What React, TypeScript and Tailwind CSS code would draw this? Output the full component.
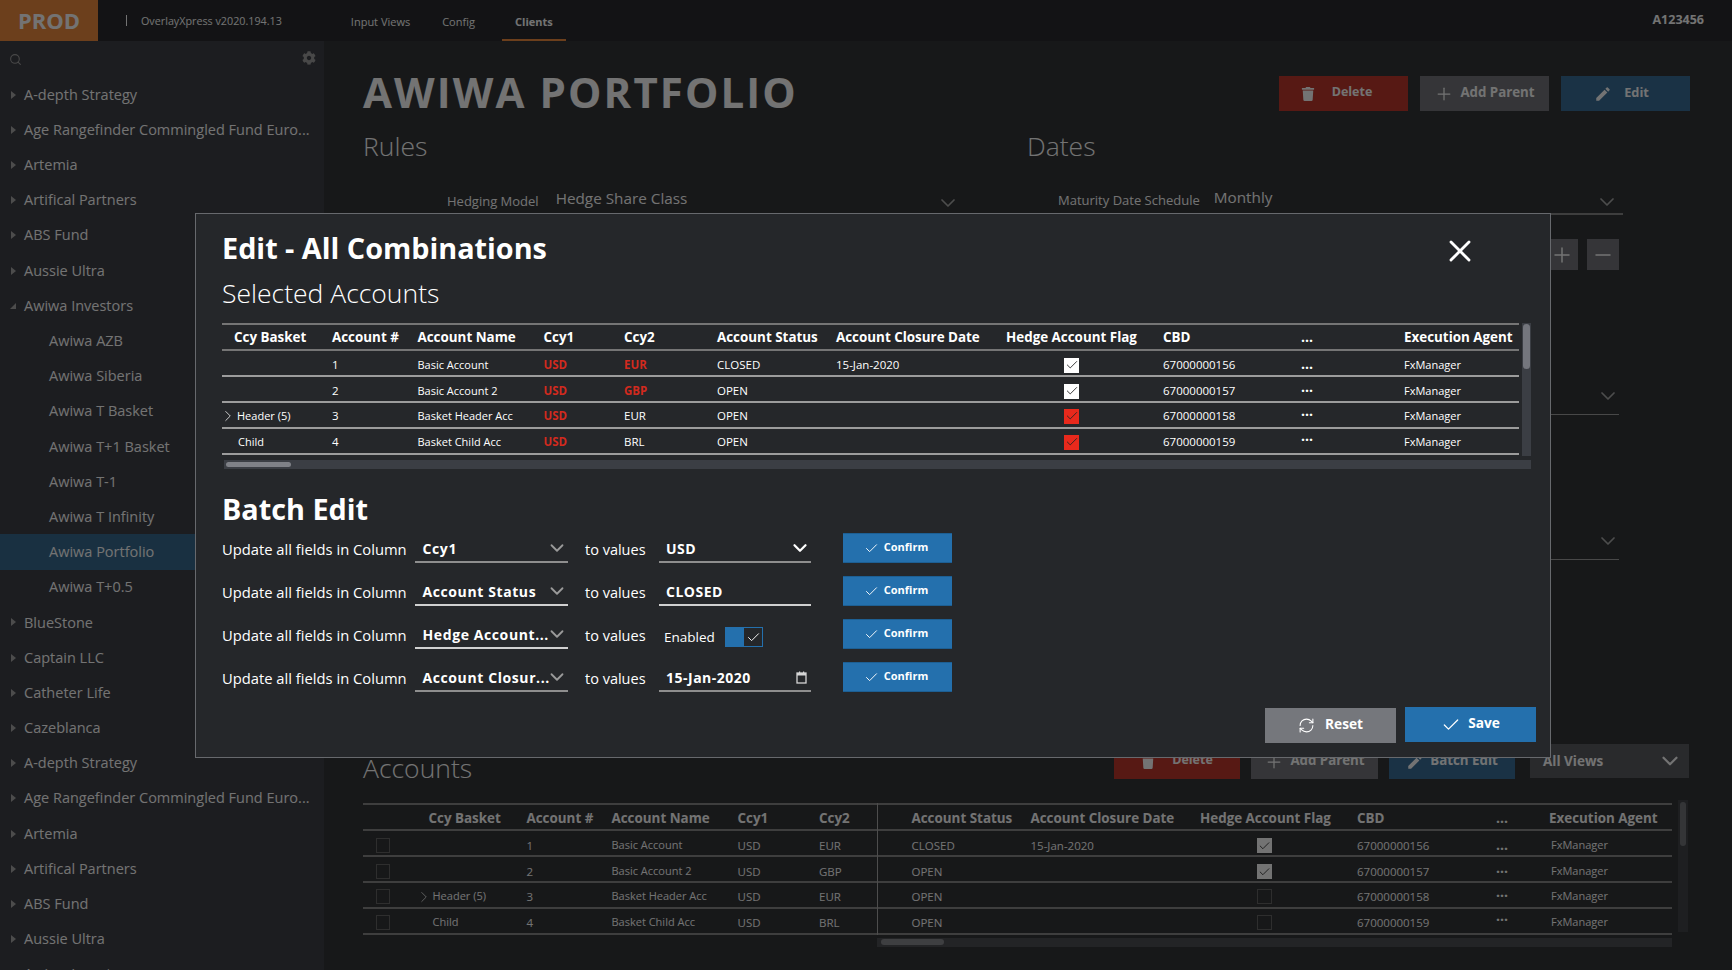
import { Check, ChevronDown, ChevronRight, Plus, Minus, X, Search, RefreshCw } from "lucide-react";
import { FaCog, FaTrash } from "react-icons/fa";
import { MdEdit } from "react-icons/md";

const font = "font-['Open_Sans','Noto_Sans',sans-serif]";

const treeBefore = [
  "A-depth Strategy",
  "Age Rangefinder Commingled Fund Euro...",
  "Artemia",
  "Artifical Partners",
  "ABS Fund",
  "Aussie Ultra",
];
const children = [
  "Awiwa AZB",
  "Awiwa Siberia",
  "Awiwa T Basket",
  "Awiwa T+1 Basket",
  "Awiwa T-1",
  "Awiwa T Infinity",
  "Awiwa Portfolio",
  "Awiwa T+0.5",
];
const treeAfter = [
  "BlueStone",
  "Captain LLC",
  "Catheter Life",
  "Cazeblanca",
  ...treeBefore,
  "Awiwa Investors",
];

const rows = [
  { basket: "", expand: false, id: "1", name: "Basic Account", ccy1: "USD", ccy2: "EUR", red2: true, status: "CLOSED", date: "15-Jan-2020", flag: "white", cbd: "67000000156", pad: "pt-[4px]", backPad: "pt-[5px]", dots: "-mt-[2px]" },
  { basket: "", expand: false, id: "2", name: "Basic Account 2", ccy1: "USD", ccy2: "GBP", red2: true, status: "OPEN", date: "", flag: "white", cbd: "67000000157", pad: "pt-[4px]", backPad: "pt-[5px]", dots: "-mt-[8px]" },
  { basket: "Header (5)", expand: true, id: "3", name: "Basket Header Acc", ccy1: "USD", ccy2: "EUR", red2: false, status: "OPEN", date: "", flag: "red", cbd: "67000000158", pad: "pt-[2px]", backPad: "pt-[3px]", dots: "-mt-[10px]" },
  { basket: "Child", expand: false, id: "4", name: "Basket Child Acc", ccy1: "USD", ccy2: "BRL", red2: false, status: "OPEN", date: "", flag: "red", cbd: "67000000159", pad: "pt-[2px]", backPad: "pt-[3px]", dots: "-mt-[13px]" },
];

function TreeRow({ label, open, closed }: { label: string; open?: boolean; closed?: boolean }) {
  return (
    <div className="flex h-[35.2px] items-center pl-[10px] text-[14.5px] text-white">
      <span className="mr-[8px] flex w-[6px] justify-center">
        {closed && <span className="h-0 w-0 border-y-[4px] border-l-[5px] border-y-transparent border-l-[#a8a8a8]" />}
        {open && <span className="h-0 w-0 border-b-[6px] border-l-[6px] border-b-[#a8a8a8] border-l-transparent" />}
      </span>
      <span className="whitespace-nowrap">{label}</span>
    </div>
  );
}

function Sidebar() {
  return (
    <aside className="h-[929px] w-[324px] shrink-0 overflow-hidden bg-[#3e4047]">
      <div className="flex h-[36px] items-center justify-between pl-[9px] pr-[8px] text-[#a0a0a0]">
        <Search size={13} />
        <FaCog size={14} className="-mt-[2px]" />
      </div>
      {treeBefore.map((t, i) => (
        <TreeRow key={i} label={t} closed />
      ))}
      <TreeRow label="Awiwa Investors" open />
      {children.map((c) => (
        <div
          key={c}
          className={`flex h-[35.2px] items-center pl-[49px] text-[14.5px] text-white ${
            c === "Awiwa Portfolio" ? "bg-[#396c90]" : ""
          }`}
        >
          {c}
        </div>
      ))}
      {treeAfter.map((t, i) => (
        <TreeRow key={i} label={t} closed />
      ))}
    </aside>
  );
}

function HeadButton({ icon, label, color, w = "w-[129px]", gap = "gap-[10px]", size = "text-[13.3px]" }: { icon: React.ReactNode; label: string; color: string; w?: string; gap?: string; size?: string }) {
  return (
    <button className={`flex h-[35px] ${w} items-center justify-center ${gap} pb-[2px] ${size} font-bold text-white ${color}`}>
      <span className="mt-[2px]">{icon}</span>
      {label}
    </button>
  );
}

function Box({ on }: { on?: boolean }) {
  return (
    <span className={`flex h-[15px] w-[15px] items-center justify-center border ${on ? "border-white bg-white" : "border-[#666]"}`}>
      {on && <Check size={14} strokeWidth={1.5} className="text-[#222]" />}
    </span>
  );
}

const bgCols = "grid-cols-[65.5px_98px_85px_126px_81.5px_59px_152.5px_169.5px_157px_139px_53px_123px]";

function BackTable() {
  return (
    <div className="flex h-[147px] gap-[6px] text-white">
      <div className="w-[1309px]">
        <div className="relative">
          <span className="absolute bottom-0 left-[514px] top-0 w-px bg-[#aaa]" />
          <div className={`grid h-[28px] ${bgCols} items-center border-y-2 border-y-[#8a8a8a] pt-[2px] text-[13.4px] font-bold`}>
            <span />
            <span>Ccy Basket</span>
            <span>Account #</span>
            <span>Account Name</span>
            <span>Ccy1</span>
            <span>Ccy2</span>
            <span className="pl-[33.5px]">Account Status</span>
            <span>Account Closure Date</span>
            <span>Hedge Account Flag</span>
            <span>CBD</span>
            <span className="text-[14px] leading-none">...</span>
            <span>Execution Agent</span>
          </div>
          {rows.map((r) => (
            <div key={r.id} className={`grid h-[26px] ${bgCols} items-center border-b-2 border-b-[#8a8a8a] ${r.backPad} text-[11.5px]`}>
              <span className="pl-[13px]">
                <span className="flex h-[15px] w-[14px] border border-[#666]" />
              </span>
              <span className="flex items-center text-[11px]">
                {r.expand ? <ChevronRight size={18} strokeWidth={1} className="-ml-[14px] shrink-0" /> : <span className="w-[4px]" />}
                <span>{r.basket}</span>
              </span>
              <span>{r.id}</span>
              <span className="text-[11px]">{r.name}</span>
              <span>{r.ccy1}</span>
              <span>{r.ccy2}</span>
              <span className="pl-[33.5px]">{r.status}</span>
              <span>{r.date}</span>
              <span className="pl-[57px]">
                <Box on={r.flag === "white"} />
              </span>
              <span>{r.cbd}</span>
              <span className={`text-[14px] font-bold leading-none ${r.dots}`}>...</span>
              <span className="pl-[2px] text-[11px]">FxManager</span>
            </div>
          ))}
        </div>
        <div className="ml-[514px] mt-[3px] h-[9px] bg-[#4f5156] p-[1px]">
          <div className="ml-[3px] h-[6px] w-[63px] rounded-full bg-[#8a8c90]" />
        </div>
      </div>
      <div className="-mt-[3px] h-[132px] w-[10px] bg-[#44464b] p-[2px]">
        <div className="h-[44px] rounded-full bg-[#74767b]" />
      </div>
    </div>
  );
}

function Background() {
  return (
    <div className={`flex h-[970px] w-full flex-col overflow-hidden bg-[#333538] ${font}`}>
      <header className="flex h-[41px] shrink-0 items-center bg-[#2a2c2f] text-white">
        <div className="flex h-full w-[98px] items-center justify-center bg-[#ef8c3e] text-[22px] font-bold">PROD</div>
        <span className="ml-[28px] h-[11px] w-px bg-white" />
        <span className="ml-[14px] pt-[1px] text-[10.75px]">OverlayXpress v2020.194.13</span>
        <nav className="ml-[69px] flex h-full items-center text-[11px]">
          <span className="pt-[4px]">Input Views</span>
          <span className="ml-[32px] pt-[4px]">Config</span>
          <span className="ml-[27px] flex h-full w-[64px] items-center justify-center border-b-2 border-b-[#ef8c3e] pt-[5px] font-bold">Clients</span>
        </nav>
        <span className="ml-auto mr-[28px] -mt-[1px] text-[12.5px] font-bold">A123456</span>
      </header>
      <div className="flex min-h-0 flex-1">
        <Sidebar />
        <main className="min-w-0 flex-1 pl-[39px] pr-[42px] text-white">
          <div className="flex h-[70px] items-start justify-between pt-[35px]">
            <h1 className="-mt-[13px] text-[42px] font-bold leading-[57px] tracking-[2.1px]">AWIWA PORTFOLIO</h1>
            <div className="flex gap-[12px]">
              <HeadButton icon={<FaTrash size={14} />} label="Delete" color="bg-[#c0392d]" gap="gap-[17px] pr-[14px]" size="text-[12.5px]" />
              <HeadButton icon={<Plus size={20} strokeWidth={1.5} />} label="Add Parent" color="bg-[#75777c]" gap="gap-[6px]" />
              <HeadButton icon={<MdEdit size={18} />} label="Edit" color="bg-[#3a7099]" gap="gap-[12px] pr-[8px]" size="text-[12.8px]" />
            </div>
          </div>
          <div className="mt-[19px] grid grid-cols-[664px_596px] text-[26.5px] font-light leading-[32px]">
            <span>Rules</span>
            <span>Dates</span>
          </div>
          <div className="mt-[29px] grid grid-cols-[664px_596px] text-[13px]">
            <div className="flex h-[24px] items-center pl-[84px]">
              <span className="-mt-[3px] mr-[17px]">Hedging Model</span>
              <span className="-mt-[9px] flex-1 text-[15.3px]">Hedge Share Class</span>
              <ChevronDown size={24} strokeWidth={1.75} className="mr-[67px] text-[#aaa]" />
            </div>
            <div className="flex h-[24px] items-center border-b-2 border-b-[#8a8a8a] pl-[31px]">
              <span className="-mt-[3px] mr-[14px]">Maturity Date Schedule</span>
              <span className="-mt-[9px] flex-1 text-[15.3px]">Monthly</span>
              <ChevronDown size={24} strokeWidth={1.75} className="mr-[4px] text-[#aaa]" />
            </div>
          </div>
          <div className="mt-[24px] flex justify-end gap-[9px] pr-[71px]">
            <span className="flex h-[31px] w-[32px] items-center justify-center bg-[#75777c]"><Plus size={24} strokeWidth={1.5} /></span>
            <span className="flex h-[31px] w-[32px] items-center justify-center bg-[#75777c]"><Minus size={24} strokeWidth={1.5} /></span>
          </div>
          <div className="ml-[664px] mt-[121px] flex h-[24px] w-[592px] items-start justify-end border-b border-b-[#a0a0a0]">
            <ChevronDown size={24} strokeWidth={1.75} className="-mt-[7px] mr-[-1px] text-[#aaa]" />
          </div>
          <div className="ml-[664px] mt-[121px] flex h-[24px] w-[592px] items-start justify-end border-b border-b-[#a0a0a0]">
            <ChevronDown size={24} strokeWidth={1.75} className="-mt-[7px] mr-[-1px] text-[#aaa]" />
          </div>
          <div className="mt-[184px] flex h-[34px] items-start justify-between">
            <span className="mt-[6px] text-[26.5px] font-light leading-[36px]">Accounts</span>
            <div className="flex gap-[11px]">
              <HeadButton w="w-[126px]" icon={<FaTrash size={14} />} label="Delete" color="bg-[#c0392d]" gap="gap-[17px]" size="text-[12.5px]" />
              <HeadButton w="w-[127px]" icon={<Plus size={20} strokeWidth={1.5} />} label="Add Parent" color="bg-[#75777c]" gap="gap-[6px]" />
              <HeadButton w="w-[126px]" icon={<MdEdit size={18} />} label="Batch Edit" color="bg-[#3a7099]" gap="gap-[6px]" />
              <div className="ml-[4px] mr-[1px] flex h-[34px] w-[159px] items-center justify-between bg-[#5c5e63] pl-[13px] pr-[6px] text-[13.5px] font-bold">
                All Views
                <ChevronDown size={26} strokeWidth={2} />
              </div>
            </div>
          </div>
          <div className="mt-[25px]">
            <BackTable />
          </div>
        </main>
      </div>
    </div>
  );
}

const cols = "grid-cols-[110px_85.5px_126px_80.5px_93px_119px_170px_157px_138px_103px_115px]";

function ModalTable() {
  return (
    <div className="mr-[-12px] mt-[13px] text-white">
      <div className="flex gap-[3px]">
        <div className="w-[1297px]">
          <div className={`grid h-[28px] ${cols} items-center border-y-2 border-y-[#757575] text-[13.4px] font-bold`}>
            <span className="pl-[12px]">Ccy Basket</span>
            <span>Account #</span>
            <span>Account Name</span>
            <span>Ccy1</span>
            <span>Ccy2</span>
            <span>Account Status</span>
            <span>Account Closure Date</span>
            <span>Hedge Account Flag</span>
            <span>CBD</span>
            <span className="text-[14px] leading-none">...</span>
            <span>Execution Agent</span>
          </div>
          {rows.map((r) => (
            <div key={r.id} className={`grid h-[26px] ${cols} items-center border-b-2 border-b-[#9c9c9c] ${r.pad} text-[11.5px]`}>
              <span className="flex items-center text-[11px]">
                {r.expand ? <ChevronRight size={18} strokeWidth={1} className="-ml-[3px] shrink-0" /> : <span className="w-[16px]" />}
                <span>{r.basket}</span>
              </span>
              <span>{r.id}</span>
              <span className="text-[11px]">{r.name}</span>
              <span className="font-bold text-[#d22a1e]">{r.ccy1}</span>
              <span className={r.red2 ? "font-bold text-[#d22a1e]" : ""}>{r.ccy2}</span>
              <span>{r.status}</span>
              <span>{r.date}</span>
              <span className="pl-[58px]">
                <span className={`flex h-[15px] w-[15px] items-center justify-center ${r.flag === "white" ? "bg-white" : "bg-[#e8291c]"}`}>
                  <Check size={14} strokeWidth={1.5} className="text-[#222]" />
                </span>
              </span>
              <span>{r.cbd}</span>
              <span className={`text-[14px] font-bold leading-none ${r.dots}`}>...</span>
              <span className="text-[11px]">FxManager</span>
            </div>
          ))}
        </div>
        <div className="h-[133px] w-[9px] bg-[#3b3e44] p-[1px]">
          <div className="h-[45px] rounded-full bg-[#74767d]" />
        </div>
      </div>
      <div className="ml-[2px] mt-[4px] h-[9px] w-[1307px] bg-[#3b3e44] p-[2px]">
        <div className="h-[5px] w-[65px] rounded-full bg-[#7f8187]" />
      </div>
    </div>
  );
}

function BatchSelect({ label, thin }: { label: string; thin?: boolean }) {
  return (
    <div className={`flex h-[30px] w-[153px] items-center justify-between border-b-2 pl-[8px] pt-[3px] ${thin ? "border-b-[#d0d0d0]" : "border-b-[#8e8e8e]"}`}>
      <span className="whitespace-nowrap text-[14px] font-bold tracking-[0.6px]">{label}</span>
      <ChevronDown size={22} strokeWidth={2} className="-ml-[5px] -mt-[2px] shrink-0 text-[#9a9a9a]" />
    </div>
  );
}

function BatchRow({ column, thin, children }: { column: string; thin?: boolean; children: React.ReactNode }) {
  return (
    <div className="flex h-[30px] items-start text-white">
      <span className="w-[192.5px] whitespace-nowrap pt-[5px] text-[14.75px] leading-[22px]">Update all fields in Column</span>
      <BatchSelect label={column} thin={thin} />
      <span className="ml-[17.5px] w-[74px] pt-[6px] text-[14.5px] leading-[22px]">to values</span>
      <div className="w-[152px]">{children}</div>
      <button className="ml-[32px] flex h-[30px] w-[109px] items-center justify-center gap-[5px] border-y border-y-[#1d5f93] bg-[#2470ad] pb-[2px] pr-[3px] text-[11px] font-bold">
        <Check size={15} strokeWidth={1.5} className="mt-[2px]" />
        Confirm
      </button>
    </div>
  );
}

function ValueField({ children, thin }: { children: React.ReactNode; thin?: boolean }) {
  return (
    <div className={`flex h-[30px] items-center justify-between border-b-2 pl-[7px] pt-[3px] text-[14px] font-bold tracking-[0.5px] ${thin ? "border-b-[#d0d0d0]" : "border-b-[#8e8e8e]"}`}>
      {children}
    </div>
  );
}

function CalendarGlyph() {
  return (
    <svg width="11" height="13" viewBox="0 0 11 13" className="mr-[4px]">
      <rect x="1" y="2" width="9" height="10" fill="none" stroke="#d5d5d5" strokeWidth="1.3" />
      <rect x="1" y="2" width="9" height="2.5" fill="#d5d5d5" />
      <rect x="3" y="0.5" width="1.2" height="2" fill="#d5d5d5" />
      <rect x="7" y="0.5" width="1.2" height="2" fill="#d5d5d5" />
    </svg>
  );
}

function Modal() {
  return (
    <div className={`absolute left-[195px] top-[213px] h-[545px] w-[1356px] border border-[#67696d] bg-[#25272a] px-[26px] text-white ${font}`}>
      <button className="absolute right-[72px] top-[19px] text-white">
        <X size={36} strokeWidth={1.9} />
      </button>
      <h2 className="mt-[14px] text-[28.8px] font-bold leading-[40px]">Edit - All Combinations</h2>
      <h3 className="mt-[9px] text-[26.5px] font-light leading-[33px]">Selected Accounts</h3>
      <ModalTable />
      <h2 className="mt-[20px] text-[28.8px] font-bold leading-[40px]">Batch Edit</h2>
      <div className="mt-[4px] flex flex-col gap-[13px]">
        <BatchRow column="Ccy1">
          <ValueField>
            USD
            <ChevronDown size={22} strokeWidth={2.5} className="-mt-[2px]" />
          </ValueField>
        </BatchRow>
        <BatchRow column="Account Status" thin>
          <ValueField thin>CLOSED</ValueField>
        </BatchRow>
        <BatchRow column="Hedge Account..." thin>
          <div className="flex h-[30px] items-center pl-[5px] pt-[6px]">
            <span className="w-[61px] text-[13.5px]">Enabled</span>
            <span className="flex h-[20px] w-[38px] justify-end border border-[#2470ad] bg-[#2470ad]">
              <span className="flex h-full w-[18px] items-center justify-center bg-[#25272a]">
                <Check size={15} strokeWidth={1.5} />
              </span>
            </span>
          </div>
        </BatchRow>
        <BatchRow column="Account Closur...">
          <ValueField>
            15-Jan-2020
            <CalendarGlyph />
          </ValueField>
        </BatchRow>
      </div>
      <div className="mr-[-12px] mt-[15px] flex items-start justify-end gap-[9px]">
        <button className="mt-[1px] flex h-[35px] w-[131px] items-center justify-center gap-[10px] bg-[#75777c] pb-[3px] text-[13.7px] font-bold">
          <RefreshCw size={17} strokeWidth={1.5} className="mt-[3px]" />
          Reset
        </button>
        <button className="flex h-[35px] w-[131px] items-center justify-center gap-[7px] bg-[#2470ad] pb-[3px] text-[13.7px] font-bold">
          <Check size={20} strokeWidth={1.5} className="mt-[3px]" />
          Save
        </button>
      </div>
    </div>
  );
}

export default function App() {
  return (
    <div className="relative h-[970px] w-[1732px] overflow-hidden">
      <Background />
      <div className="absolute inset-0 bg-black/55" />
      <Modal />
    </div>
  );
}
